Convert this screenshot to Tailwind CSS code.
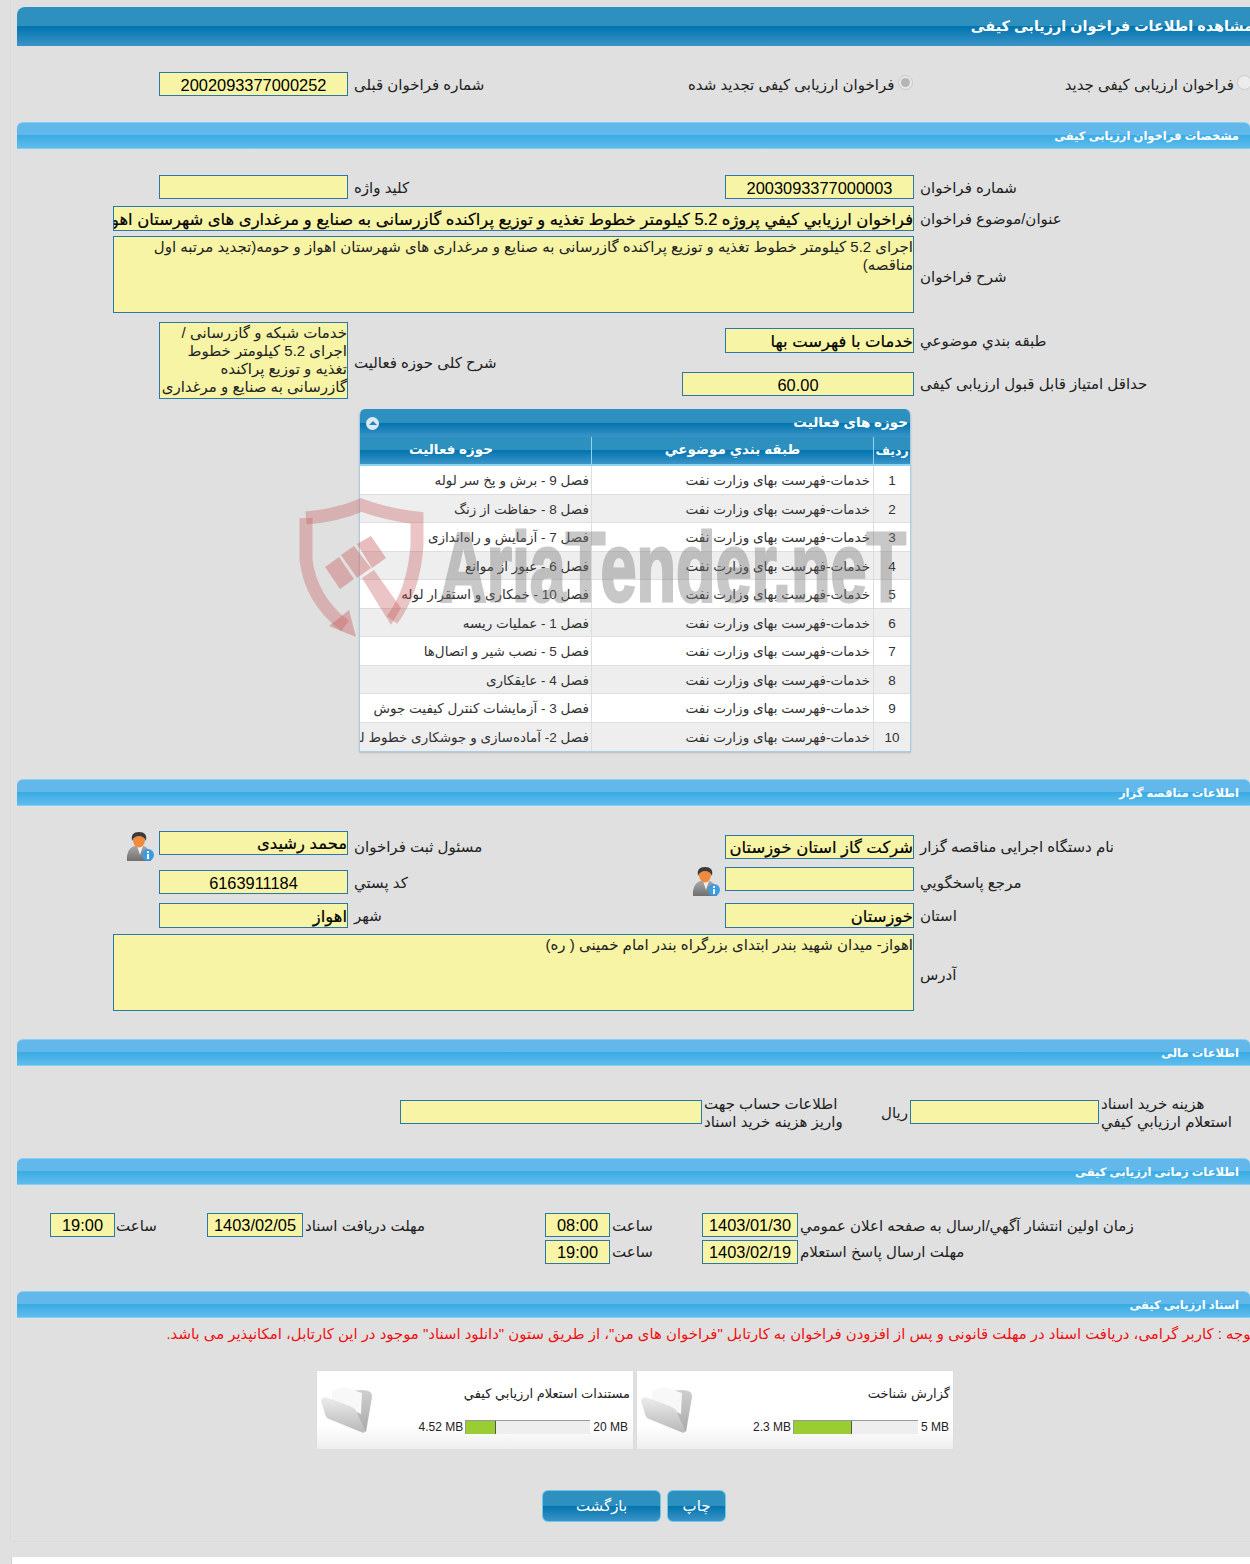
<!DOCTYPE html>
<html lang="fa">
<head>
<meta charset="UTF-8">
<title>مشاهده اطلاعات فراخوان ارزیابی کیفی</title>
<script src="https://cdn.jsdelivr.net/npm/@tailwindcss/browser@4"></script>
</head>
<body class="bg-[#e0e0e0] font-['Liberation_Sans','DejaVu_Sans',sans-serif] text-[15px] text-[#222]">
<div class="relative w-[1250px] h-[1564px] overflow-hidden">
<div class="ml-[10px] h-[1542px] border-l border-b border-[#dbdbdb]">
<div class="-ml-[11px] w-[1250px] overflow-hidden">

    <!-- title -->
    <div class="ml-[17px] mt-[7px] h-[39px] rounded-tl-[8px] bg-[linear-gradient(#2e90bf_0%,#2e90bf_49%,#0274ae_50%,#3b94c8_100%)] flex justify-end items-center overflow-hidden">
        <span dir="rtl" class="text-white font-bold text-[14.4px] whitespace-nowrap -mr-[3px]">مشاهده اطلاعات فراخوان ارزیابی کیفی</span>
    </div>

    <!-- radios row -->
    <div class="mt-[26px] h-[24px] flex items-center pl-[159px]">
        <div class="w-[189px] h-[24px] shrink-0 bg-[#f7f5a5] border border-[#2b78a8] text-center text-[16.4px] leading-[24px] text-black">2002093377000252</div>
        <span dir="rtl" class="ml-[6px] pt-[2px] w-[334px] shrink-0 text-left">شماره فراخوان قبلی</span>
        <span dir="rtl" class="w-[208px] pt-[2px] shrink-0 text-left">فراخوان ارزیابی کیفی تجدید شده</span>
        <span class="ml-[2px] -mt-[4px] w-[15px] h-[15px] shrink-0 rounded-full border border-[#c9c9c9] bg-[#e8e8e8] flex items-center justify-center"><span class="w-[9px] h-[9px] rounded-full bg-[#b5b5b5]"></span></span>
        <span dir="rtl" class="ml-[153px] pt-[2px] w-[168px] shrink-0 text-left whitespace-nowrap">فراخوان ارزیابی کیفی جدید</span>
        <span class="ml-[3px] -mt-[4px] w-[15px] h-[15px] shrink-0 rounded-full border border-[#c9c9c9] bg-[#ececec]"></span>
    </div>

    <!-- section: specs -->
    <div class="ml-[17px] mt-[26px] h-[27px] pt-[2px] rounded-t-[6px] border-y border-[#7fd2f6] bg-[linear-gradient(#62b8ea_0%,#62b8ea_48%,#3aabe3_50%,#5fbcec_100%)] flex justify-end items-center pr-[11px]">
        <span dir="rtl" class="text-white font-bold text-[11.5px]">مشخصات فراخوان ارزیابی کیفی</span>
    </div>

    <div class="mt-[26px] h-[24px] flex items-center pl-[159px]">
        <div class="w-[189px] h-[24px] shrink-0 bg-[#f7f5a5] border border-[#2b78a8]"></div>
        <span dir="rtl" class="ml-[6px] pt-[2px] w-[371px] shrink-0 text-left">کلید واژه</span>
        <div class="w-[189px] h-[24px] shrink-0 bg-[#f7f5a5] border border-[#2b78a8] text-center text-[16.4px] leading-[24px] text-black">2003093377000003</div>
        <span dir="rtl" class="ml-[6px] pt-[2px] text-left">شماره فراخوان</span>
    </div>

    <div class="mt-[7px] h-[25px] flex items-center pl-[113px]">
        <div dir="rtl" class="w-[801px] h-[25px] shrink-0 bg-[#f7f5a5] border border-[#2b78a8] overflow-hidden whitespace-nowrap text-black [-webkit-text-stroke:0.2px_black] text-[16.4px] leading-[24px]">فراخوان ارزیابي کیفي پروژه 5.2 کیلومتر خطوط تغذیه و توزیع پراکنده گازرسانی به صنایع و مرغداری های شهرستان اهواز و حومه</div>
        <span dir="rtl" class="ml-[6px] pt-[1px] text-left">عنوان/موضوع فراخوان</span>
    </div>

    <div class="mt-[5px] h-[77px] flex items-center pl-[113px]">
        <div dir="rtl" class="w-[801px] h-[77px] shrink-0 bg-[#f7f5a5] border border-[#2b78a8] leading-[18px] pt-[1px]">اجرای 5.2 کیلومتر خطوط تغذیه و توزیع پراکنده گازرسانی به صنایع و مرغداری های شهرستان اهواز و حومه(تجدید مرتبه اول مناقصه)</div>
        <span dir="rtl" class="ml-[6px] pt-[6px] text-left">شرح فراخوان</span>
    </div>

    <div class="mt-[9px] h-[77px] flex pl-[159px]">
        <div dir="rtl" class="w-[189px] h-[77px] shrink-0 bg-[#f7f5a5] border border-[#2b78a8] overflow-hidden leading-[18px] pt-[1px]">خدمات شبکه و گازرسانی / اجرای 5.2 کیلومتر خطوط تغذیه و توزیع پراکنده گازرسانی به صنایع و مرغداری</div>
        <span dir="rtl" class="ml-[6px] pt-[6px] w-[328px] shrink-0 text-left self-center">شرح کلی حوزه فعالیت</span>
        <div class="flex flex-col pt-[6px]">
            <div class="flex items-center h-[25px]">
                <div class="w-[189px] ml-[43px] h-[25px] bg-[#f7f5a5] border border-[#2b78a8] shrink-0 [-webkit-text-stroke:0.2px_black] text-[16.4px] leading-[24px] text-black" dir="rtl">خدمات با فهرست بها</div>
                <span dir="rtl" class="ml-[6px] pt-[1px] text-left whitespace-nowrap">طبقه بندي موضوعي</span>
            </div>
            <div class="flex items-center h-[24px] mt-[19px]">
                <div class="w-[232px] h-[24px] bg-[#f7f5a5] border border-[#2b78a8] shrink-0 text-center text-[16.4px] leading-[24px] text-black">60.00</div>
                <span dir="rtl" class="ml-[6px] pt-[1px] text-left whitespace-nowrap">حداقل امتیاز قابل قبول ارزیابی کیفی</span>
            </div>
        </div>
    </div>

    <!-- activity table -->
    <div class="ml-[359px] mt-[10px] w-[552px] h-[343px] rounded-t-[6px] border-x border-b border-[#a9cde4] overflow-hidden shadow-[0_1px_2px_#bbb]">
        <div class="h-[28px] bg-[linear-gradient(#2e90bf_0%,#2e90bf_49%,#0274ae_50%,#3b94c8_100%)] flex items-center justify-between pl-[4px] pr-[2px]">
            <span class="w-[13px] h-[13px] ml-[2px] rounded-full bg-[#dce8f5] flex items-center justify-center"><span class="border-x-[4px] border-b-[4px] border-x-transparent border-b-[#2b84b8]"></span></span>
            <span dir="rtl" class="text-white font-bold text-[13.5px]">حوزه های فعالیت</span>
        </div>
        <div dir="rtl" class="grid grid-cols-[37px_282px_232px] h-[29px] text-white font-bold text-[13.5px] text-center bg-[linear-gradient(#2e90bf_0%,#2e90bf_49%,#0274ae_50%,#3b94c8_100%)] border-b-2 border-[#8fd3f2] leading-[25px]">
            <div class="border-l border-[#8fd3f2] text-[12.5px] leading-[28px]">رديف</div>
            <div class="border-l border-[#8fd3f2]">طبقه بندي موضوعي</div>
            <div class="pr-[48px]">حوزه فعالیت</div>
        </div>
        <div dir="rtl" class="grid grid-cols-[37px_282px_232px] auto-rows-[28.5px] text-[13.5px] leading-[29px] text-[#333]">
            <div class="border-l border-b border-[#dedede] bg-white text-center">1</div><div class="border-l border-b border-[#dedede] bg-white pr-[3px]">خدمات-فهرست بهای وزارت نفت</div><div class="border-b border-[#dedede] bg-white pr-[2px] whitespace-nowrap overflow-hidden">فصل 9 - برش و پخ سر لوله</div>
            <div class="border-l border-b border-[#dedede] bg-[#eee] text-center">2</div><div class="border-l border-b border-[#dedede] bg-[#eee] pr-[3px]">خدمات-فهرست بهای وزارت نفت</div><div class="border-b border-[#dedede] bg-[#eee] pr-[2px] whitespace-nowrap overflow-hidden">فصل 8 - حفاظت از زنگ</div>
            <div class="border-l border-b border-[#dedede] bg-white text-center">3</div><div class="border-l border-b border-[#dedede] bg-white pr-[3px]">خدمات-فهرست بهای وزارت نفت</div><div class="border-b border-[#dedede] bg-white pr-[2px] whitespace-nowrap overflow-hidden">فصل 7 - آزمایش و راه‌اندازی</div>
            <div class="border-l border-b border-[#dedede] bg-[#eee] text-center">4</div><div class="border-l border-b border-[#dedede] bg-[#eee] pr-[3px]">خدمات-فهرست بهای وزارت نفت</div><div class="border-b border-[#dedede] bg-[#eee] pr-[2px] whitespace-nowrap overflow-hidden">فصل 6 - عبور از موانع</div>
            <div class="border-l border-b border-[#dedede] bg-white text-center">5</div><div class="border-l border-b border-[#dedede] bg-white pr-[3px]">خدمات-فهرست بهای وزارت نفت</div><div class="border-b border-[#dedede] bg-white pr-[2px] whitespace-nowrap overflow-hidden">فصل 10 - خمکاری و استقرار لوله</div>
            <div class="border-l border-b border-[#dedede] bg-[#eee] text-center">6</div><div class="border-l border-b border-[#dedede] bg-[#eee] pr-[3px]">خدمات-فهرست بهای وزارت نفت</div><div class="border-b border-[#dedede] bg-[#eee] pr-[2px] whitespace-nowrap overflow-hidden">فصل 1 - عملیات ریسه</div>
            <div class="border-l border-b border-[#dedede] bg-white text-center">7</div><div class="border-l border-b border-[#dedede] bg-white pr-[3px]">خدمات-فهرست بهای وزارت نفت</div><div class="border-b border-[#dedede] bg-white pr-[2px] whitespace-nowrap overflow-hidden">فصل 5 - نصب شیر و اتصال‌ها</div>
            <div class="border-l border-b border-[#dedede] bg-[#eee] text-center">8</div><div class="border-l border-b border-[#dedede] bg-[#eee] pr-[3px]">خدمات-فهرست بهای وزارت نفت</div><div class="border-b border-[#dedede] bg-[#eee] pr-[2px] whitespace-nowrap overflow-hidden">فصل 4 - عایقکاری</div>
            <div class="border-l border-b border-[#dedede] bg-white text-center">9</div><div class="border-l border-b border-[#dedede] bg-white pr-[3px]">خدمات-فهرست بهای وزارت نفت</div><div class="border-b border-[#dedede] bg-white pr-[2px] whitespace-nowrap overflow-hidden">فصل 3 - آزمایشات کنترل کیفیت جوش</div>
            <div class="border-l border-[#dedede] bg-[#eee] text-center">10</div><div class="border-l border-[#dedede] bg-[#eee] pr-[3px]">خدمات-فهرست بهای وزارت نفت</div><div class="bg-[#eee] pr-[2px] whitespace-nowrap overflow-hidden">فصل 2- آماده‌سازی و جوشکاری خطوط لوله</div>
        </div>
    </div>

    <!-- section: tender info -->
    <div class="ml-[17px] mt-[27px] h-[27px] pt-[2px] rounded-t-[6px] border-y border-[#7fd2f6] bg-[linear-gradient(#62b8ea_0%,#62b8ea_48%,#3aabe3_50%,#5fbcec_100%)] flex justify-end items-center pr-[11px]">
        <span dir="rtl" class="text-white font-bold text-[11.5px]">اطلاعات مناقصه گزار</span>
    </div>

    <div class="mt-[25px] h-[28px] flex items-start pl-[126px]">
        <svg class="w-[28px] h-[31px] shrink-0 mr-[5px]" viewBox="0 0 28 31"><defs><linearGradient id="suit" x1="0" y1="0" x2="0" y2="1"><stop offset="0" stop-color="#a8a8a8"/><stop offset="1" stop-color="#6f6f6f"/></linearGradient></defs><path d="M1 30 Q0 18 8 15 L18 15 Q25 18 25 30 Z" fill="url(#suit)"/><path d="M11 15 L14 24 L17 15 Z" fill="#eee"/><ellipse cx="13" cy="9" rx="6" ry="7.5" fill="#f08a3c"/><path d="M6 10 Q4 1 13 1 Q22 1 20 10 Q18 5 13 5 Q8 5 6 10 Z" fill="#3a3a3a"/><circle cx="22" cy="24" r="6" fill="#3d9be0"/><rect x="21" y="23" width="2" height="5" fill="#fff"/><rect x="21" y="20" width="2" height="2" fill="#fff"/></svg>
        <div dir="rtl" class="w-[189px] h-[24px] shrink-0 bg-[#f7f5a5] border border-[#2b78a8] [-webkit-text-stroke:0.2px_black] text-[16.4px] leading-[23px] text-black">محمد رشیدی</div>
        <span dir="rtl" class="ml-[6px] mt-[5px] w-[371px] shrink-0 text-left">مسئول ثبت فراخوان</span>
        <div dir="rtl" class="mt-[4px] w-[189px] h-[24px] shrink-0 bg-[#f7f5a5] border border-[#2b78a8] [-webkit-text-stroke:0.2px_black] text-[16.4px] leading-[23px] text-black whitespace-nowrap">شرکت گاز استان خوزستان</div>
        <span dir="rtl" class="ml-[6px] mt-[5px] text-left whitespace-nowrap">نام دستگاه اجرایی مناقصه گزار</span>
    </div>

    <div class="mt-[8px] h-[28px] flex items-start pl-[159px]">
        <div class="mt-[3px] w-[189px] h-[24px] shrink-0 bg-[#f7f5a5] border border-[#2b78a8] text-center text-[16.4px] leading-[24px] text-black">6163911184</div>
        <span dir="rtl" class="ml-[6px] mt-[5px] w-[338px] shrink-0 text-left">کد پستي</span>
        <svg class="w-[28px] h-[31px] shrink-0 -mt-[1px] mr-[5px]" viewBox="0 0 28 31"><path d="M1 30 Q0 18 8 15 L18 15 Q25 18 25 30 Z" fill="url(#suit)"/><path d="M11 15 L14 24 L17 15 Z" fill="#eee"/><ellipse cx="13" cy="9" rx="6" ry="7.5" fill="#f08a3c"/><path d="M6 10 Q4 1 13 1 Q22 1 20 10 Q18 5 13 5 Q8 5 6 10 Z" fill="#3a3a3a"/><circle cx="22" cy="24" r="6" fill="#3d9be0"/><rect x="21" y="23" width="2" height="5" fill="#fff"/><rect x="21" y="20" width="2" height="2" fill="#fff"/></svg>
        <div class="w-[189px] h-[24px] shrink-0 bg-[#f7f5a5] border border-[#2b78a8]"></div>
        <span dir="rtl" class="ml-[6px] mt-[5px] text-left">مرجع پاسخگويي</span>
    </div>

    <div class="h-[25px] mt-[8px] flex items-center pl-[159px]">
        <div dir="rtl" class="w-[189px] h-[25px] shrink-0 bg-[#f7f5a5] border border-[#2b78a8] [-webkit-text-stroke:0.2px_black] text-[16.4px] leading-[24px] text-black">اهواز</div>
        <span dir="rtl" class="ml-[6px] pt-[1px] w-[371px] shrink-0 text-left">شهر</span>
        <div dir="rtl" class="w-[189px] h-[25px] shrink-0 bg-[#f7f5a5] border border-[#2b78a8] [-webkit-text-stroke:0.2px_black] text-[16.4px] leading-[24px] text-black">خوزستان</div>
        <span dir="rtl" class="ml-[6px] pt-[1px] text-left">استان</span>
    </div>

    <div class="mt-[6px] h-[77px] flex items-center pl-[113px]">
        <div dir="rtl" class="w-[801px] h-[77px] shrink-0 bg-[#f7f5a5] border border-[#2b78a8] leading-[18px] pt-[1px]">اهواز- میدان شهید بندر ابتدای بزرگراه بندر امام خمینی ( ره)</div>
        <span dir="rtl" class="ml-[6px] pt-[6px] text-left">آدرس</span>
    </div>

    <!-- section: finance -->
    <div class="ml-[17px] mt-[28px] h-[27px] pt-[2px] rounded-t-[6px] border-y border-[#7fd2f6] bg-[linear-gradient(#62b8ea_0%,#62b8ea_48%,#3aabe3_50%,#5fbcec_100%)] flex justify-end items-center pr-[11px]">
        <span dir="rtl" class="text-white font-bold text-[11.5px]">اطلاعات مالی</span>
    </div>

    <div class="mt-[34px] h-[24px] flex items-center pl-[400px]">
        <div class="w-[302px] h-[24px] shrink-0 bg-[#f7f5a5] border border-[#2b78a8]"></div>
        <span dir="rtl" class="ml-[2px] pt-[2px] w-[177px] shrink-0 text-left leading-[18px]">اطلاعات حساب جهت<br>واریز هزینه خرید اسناد</span>
        <span dir="rtl" class="w-[29px] pt-[2px] shrink-0 text-left">ریال</span>
        <div class="w-[189px] h-[24px] shrink-0 bg-[#f7f5a5] border border-[#2b78a8]"></div>
        <span dir="rtl" class="ml-[2px] pt-[2px] text-left leading-[18px] whitespace-nowrap">هزینه خرید اسناد<br>استعلام ارزیابي کیفي</span>
    </div>

    <!-- section: dates -->
    <div class="ml-[17px] mt-[34px] h-[27px] pt-[2px] rounded-t-[6px] border-y border-[#7fd2f6] bg-[linear-gradient(#62b8ea_0%,#62b8ea_48%,#3aabe3_50%,#5fbcec_100%)] flex justify-end items-center pr-[11px]">
        <span dir="rtl" class="text-white font-bold text-[11.5px]">اطلاعات زمانی ارزیابی کیفی</span>
    </div>

    <div class="mt-[28px] h-[24px] flex items-center pl-[50px]">
        <div class="w-[65px] h-[24px] shrink-0 bg-[#f7f5a5] border border-[#2b78a8] text-center text-[16.4px] leading-[23px] text-black">19:00</div>
        <span dir="rtl" class="ml-[1px] pt-[2px] w-[91px] shrink-0 text-left">ساعت</span>
        <div class="w-[96px] h-[24px] shrink-0 bg-[#f7f5a5] border border-[#2b78a8] text-center text-[16.4px] leading-[23px] text-black">1403/02/05</div>
        <span dir="rtl" class="ml-[2px] pt-[2px] w-[240px] shrink-0 text-left">مهلت دریافت اسناد</span>
        <div class="w-[65px] h-[24px] shrink-0 bg-[#f7f5a5] border border-[#2b78a8] text-center text-[16.4px] leading-[23px] text-black">08:00</div>
        <span dir="rtl" class="ml-[2px] pt-[2px] w-[90px] shrink-0 text-left">ساعت</span>
        <div class="w-[96px] h-[24px] shrink-0 bg-[#f7f5a5] border border-[#2b78a8] text-center text-[16.4px] leading-[23px] text-black">1403/01/30</div>
        <span dir="rtl" class="ml-[2px] pt-[2px] text-left whitespace-nowrap">زمان اولین انتشار آگهي/ارسال به صفحه اعلان عمومي</span>
    </div>
    <div class="mt-[3px] h-[24px] flex items-center pl-[545px]">
        <div class="w-[65px] h-[24px] shrink-0 bg-[#f7f5a5] border border-[#2b78a8] text-center text-[16.4px] leading-[23px] text-black">19:00</div>
        <span dir="rtl" class="ml-[2px] pt-[1px] w-[90px] shrink-0 text-left">ساعت</span>
        <div class="w-[96px] h-[24px] shrink-0 bg-[#f7f5a5] border border-[#2b78a8] text-center text-[16.4px] leading-[23px] text-black">1403/02/19</div>
        <span dir="rtl" class="ml-[2px] pt-[1px] text-left whitespace-nowrap">مهلت ارسال پاسخ استعلام</span>
    </div>

    <!-- section: docs -->
    <div class="ml-[17px] mt-[27px] h-[27px] pt-[2px] rounded-t-[6px] border-y border-[#7fd2f6] bg-[linear-gradient(#62b8ea_0%,#62b8ea_48%,#3aabe3_50%,#5fbcec_100%)] flex justify-end items-center pr-[11px]">
        <span dir="rtl" class="text-white font-bold text-[11.5px]">اسناد ارزیابی کیفی</span>
    </div>

    <div class="mt-[6px] h-[20px] flex justify-end overflow-hidden">
        <span dir="rtl" class="text-[#f01010] text-[14.9px] leading-[20px] whitespace-nowrap -mr-[5px]">توجه : کاربر گرامی، دریافت اسناد در مهلت قانونی و پس از افزودن فراخوان به کارتابل "فراخوان های من"، از طریق ستون "دانلود اسناد" موجود در این کارتابل، امکانپذیر می باشد.</span>
    </div>

    <!-- doc cards -->
    <div class="mt-[27px] flex gap-[4px] pl-[317px]">
        <div class="w-[316px] h-[78px] flex bg-[linear-gradient(#fff_70%,#eee_100%)] shadow-[0_0_1px_#ccc]">
            <svg class="w-[53px] h-[47px] mt-[16px] ml-[3px] shrink-0" viewBox="0 0 53 47"><defs><linearGradient id="fa" x1="0" y1="0" x2="0" y2="1"><stop offset="0" stop-color="#ececec"/><stop offset="1" stop-color="#b8b8b8"/></linearGradient><linearGradient id="fb" x1="0" y1="0" x2="0" y2="1"><stop offset="0" stop-color="#cfcfcf"/><stop offset="1" stop-color="#a9a9a9"/></linearGradient></defs><path d="M14 5 L42 3 Q53 3 52 10 L46 45 L14 20 Z" fill="url(#fb)"/><path d="M12 4 L24 0 L42 6 L41 27 L12 14 Z" fill="#f8f8f8"/><path d="M1 13 Q3 9 8 11 L30 19 Q37 22 38 28 L45 43 Q45 47 41 45 L9 32 Q6 31 5 27 Z" fill="url(#fa)"/></svg>
            <div class="flex-1 min-w-0 pr-[3px] pt-[15px]">
                <div dir="rtl" class="text-[13px] leading-[16px] text-[#222]">مستندات استعلام ارزیابي کیفي</div>
                <div class="mt-[18px] flex items-center justify-end text-[12px] text-[#222] leading-[14px] pr-[2px]">
                    <span>4.52 MB</span>
                    <div class="mx-[2px] w-[125px] h-[14px] bg-[#eee] border-t border-l border-[#999]"><div class="w-[30px] h-full bg-[#9acd32] border-r border-[#555]"></div></div>
                    <span class="ml-[1px]">20 MB</span>
                </div>
            </div>
        </div>
        <div class="w-[316px] h-[78px] flex bg-[linear-gradient(#fff_70%,#eee_100%)] shadow-[0_0_1px_#ccc]">
            <svg class="w-[53px] h-[47px] mt-[16px] ml-[3px] shrink-0" viewBox="0 0 53 47"><path d="M14 5 L42 3 Q53 3 52 10 L46 45 L14 20 Z" fill="url(#fb)"/><path d="M12 4 L24 0 L42 6 L41 27 L12 14 Z" fill="#f8f8f8"/><path d="M1 13 Q3 9 8 11 L30 19 Q37 22 38 28 L45 43 Q45 47 41 45 L9 32 Q6 31 5 27 Z" fill="url(#fa)"/></svg>
            <div class="flex-1 min-w-0 pr-[3px] pt-[15px]">
                <div dir="rtl" class="text-[13px] leading-[16px] text-[#222]">گزارش شناخت</div>
                <div class="mt-[18px] flex items-center justify-end text-[12px] text-[#222] leading-[14px] pr-[1px]">
                    <span>2.3 MB</span>
                    <div class="mx-[2px] w-[125px] h-[14px] bg-[#eee] border-t border-l border-[#999]"><div class="w-[58px] h-full bg-[#9acd32] border-r border-[#555]"></div></div>
                    <span class="ml-[1px]">5 MB</span>
                </div>
            </div>
        </div>
    </div>

    <!-- buttons -->
    <div class="mt-[41px] flex gap-[6px] pl-[542px]">
        <button class="w-[119px] h-[32px] rounded-[6px] border border-[#6fc8ea] text-white text-[15px] bg-[linear-gradient(#2e90bf_0%,#2e90bf_49%,#0274ae_50%,#3b94c8_100%)]">بازگشت</button>
        <button class="w-[59px] h-[32px] rounded-[6px] border border-[#6fc8ea] text-white text-[15px] bg-[linear-gradient(#2e90bf_0%,#2e90bf_49%,#0274ae_50%,#3b94c8_100%)]">چاپ</button>
    </div>
</div>
</div>
<div class="ml-[11px] mt-[15px] h-[7px] bg-white border-l border-[#cfcfcf]"></div>

    <!-- watermark over the table -->
    <div class="absolute left-[289px] top-[490px] w-[640px] h-[160px] pointer-events-none">
        <svg class="absolute left-0 top-0" width="150" height="160" viewBox="290 490 150 160">
            <path d="M307 518 Q340 515 362 505 Q390 515 418 518 L418 545 Q415 590 393 620" fill="none" stroke="#c75a5a" stroke-opacity=".35" stroke-width="13"/>
            <path d="M307 518 V560 Q312 600 346 626" fill="none" stroke="#c75a5a" stroke-opacity=".35" stroke-width="13"/>
            <path d="M330 626 L350 610 L357 637 Z" fill="#c75a5a" fill-opacity=".4"/>
            <path d="M326 567 L340 557 L355 579 L341 589 Z M342 555 L355 546 L372 568 L358 578 Z M358 544 L372 536 L387 558 L373 568 Z" fill="#c75a5a" fill-opacity=".4"/>
            <path d="M363 578 L375 570 L402 608 L392 625 Z" fill="#c75a5a" fill-opacity=".35"/>
        </svg>
        <span class="absolute left-[151px] top-[28px] text-[98px] font-bold leading-[98px] whitespace-nowrap text-[#777] [-webkit-text-stroke:3px_#777] opacity-40 origin-left scale-x-[.66]">AriaTender.neT</span>
    </div>
</div>
</body>
</html>
